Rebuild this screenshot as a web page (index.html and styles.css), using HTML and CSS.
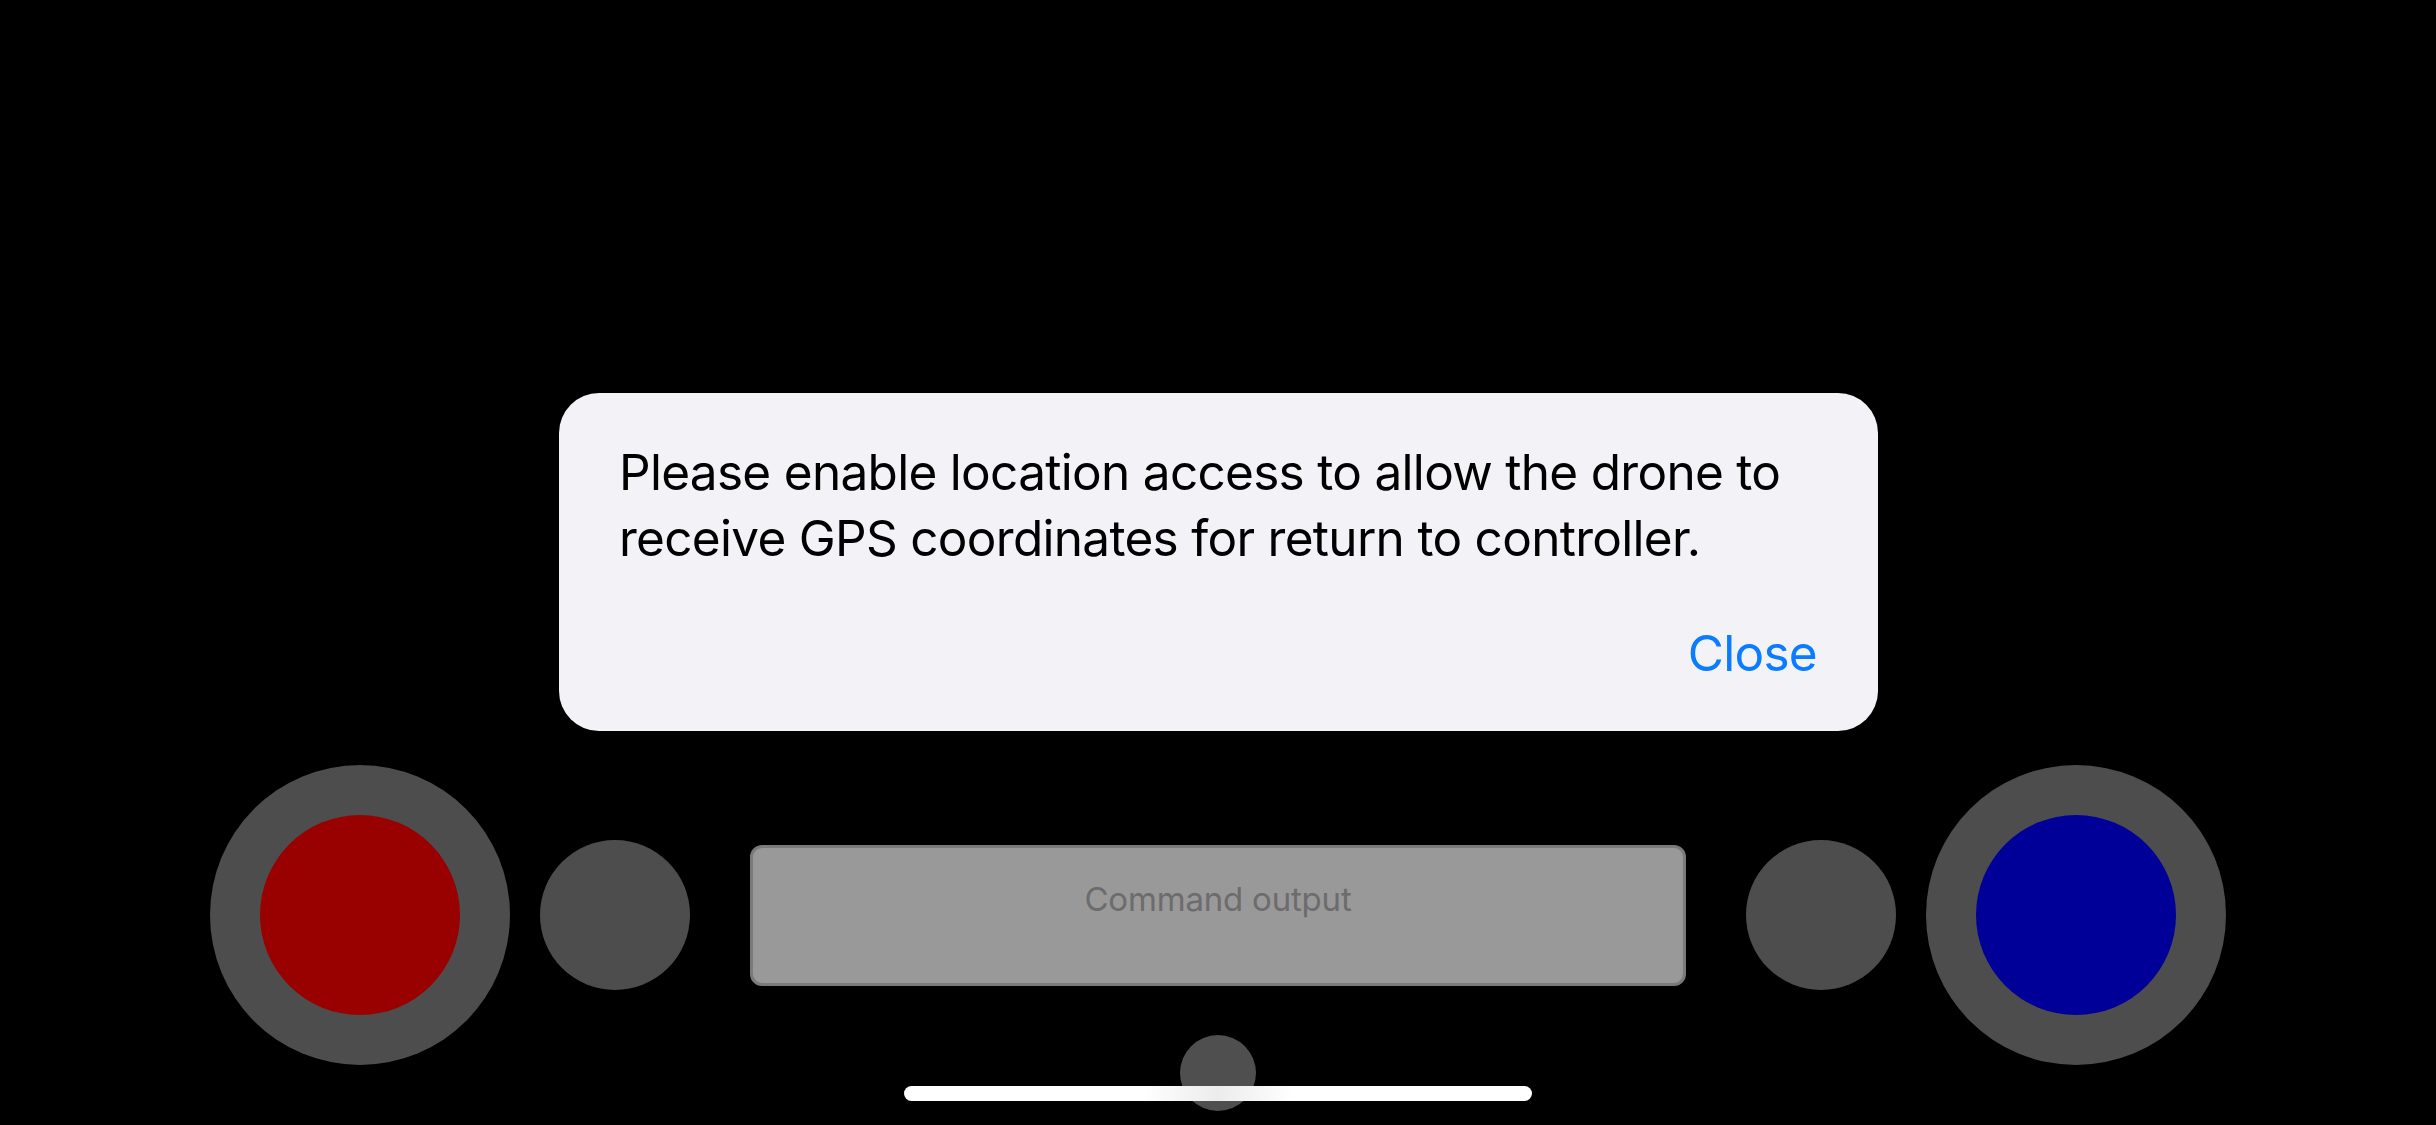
FILE: index.html
```html
<!DOCTYPE html>
<html lang="en">
<head>
<meta charset="utf-8">
<title>Drone Controller</title>
<link rel="stylesheet" href="styles.css">
</head>
<body>
<main class="screen">
  <div class="controls">
    <div class="stick"><div class="knob knob-red"></div></div>
    <div class="button-round"></div>
    <div class="center-col">
      <div class="output">Command output</div>
      <div class="button-small"></div>
    </div>
    <div class="button-round"></div>
    <div class="stick"><div class="knob knob-blue"></div></div>
  </div>
</main>

<div class="alert">
  <p class="alert-message">Please enable location access to allow the drone to<br>receive GPS coordinates for return to controller.</p>
  <div class="alert-actions"><span class="alert-button">Close</span></div>
</div>

<div class="home-indicator"></div>
</body>
</html>
```

FILE: styles.css
```css
html, body {
  margin: 0;
  padding: 0;
  background: #000;
  width: 2436px;
  height: 1125px;
  overflow: hidden;
  font-family: "Inter", "Roboto", "Liberation Sans", sans-serif;
}

.screen {
  width: 2436px;
  height: 1125px;
  box-sizing: border-box;
  padding-top: 765px;
  display: flex;
  flex-direction: column;
  align-items: center;
}

.controls {
  display: flex;
  align-items: flex-start;
}

.stick {
  width: 300px;
  height: 300px;
  border-radius: 50%;
  background: #4d4d4d;
  display: flex;
  align-items: center;
  justify-content: center;
}

.knob {
  width: 200px;
  height: 200px;
  border-radius: 50%;
}

.knob-red { background: #990000; }
.knob-blue { background: #000099; }

.button-round {
  width: 150px;
  height: 150px;
  border-radius: 50%;
  background: #4d4d4d;
  margin: 75px 30px 0;
}

.center-col {
  margin: 80px 30px 0;
  display: flex;
  flex-direction: column;
  align-items: center;
}

.output {
  width: 936px;
  height: 141px;
  box-sizing: border-box;
  border: 3px solid #7a7a7a;
  border-radius: 12px;
  background: #999999;
  color: #6c6c6c;
  font-size: 33px;
  line-height: 40px;
  letter-spacing: -0.2px;
  text-align: center;
  padding-top: 31px;
}

.button-small {
  width: 76px;
  height: 76px;
  border-radius: 50%;
  background: #4f4f4f;
  margin-top: 49px;
}

.alert {
  position: fixed;
  left: 559px;
  top: 393px;
  width: 1319px;
  height: 338px;
  box-sizing: border-box;
  background: #f2f2f7;
  border-radius: 40px;
  padding: 46px 61px 45px 60px;
  display: flex;
  flex-direction: column;
}

.alert-message {
  margin: 0;
  font-size: 49.5px;
  line-height: 66px;
  letter-spacing: -0.7px;
  white-space: nowrap;
  color: #000;
}

.alert-actions {
  margin-top: 49px;
  display: flex;
  justify-content: flex-end;
}

.alert-button {
  font-size: 49.5px;
  line-height: 66px;
  letter-spacing: -0.7px;
  color: #0a7cff;
}

.home-indicator {
  position: fixed;
  left: 904px;
  top: 1086px;
  width: 628px;
  height: 15px;
  border-radius: 8px;
  background: linear-gradient(90deg, #fff 0%, #fff 38%, #ececec 50%, #fff 62%, #fff 100%);
}
```
